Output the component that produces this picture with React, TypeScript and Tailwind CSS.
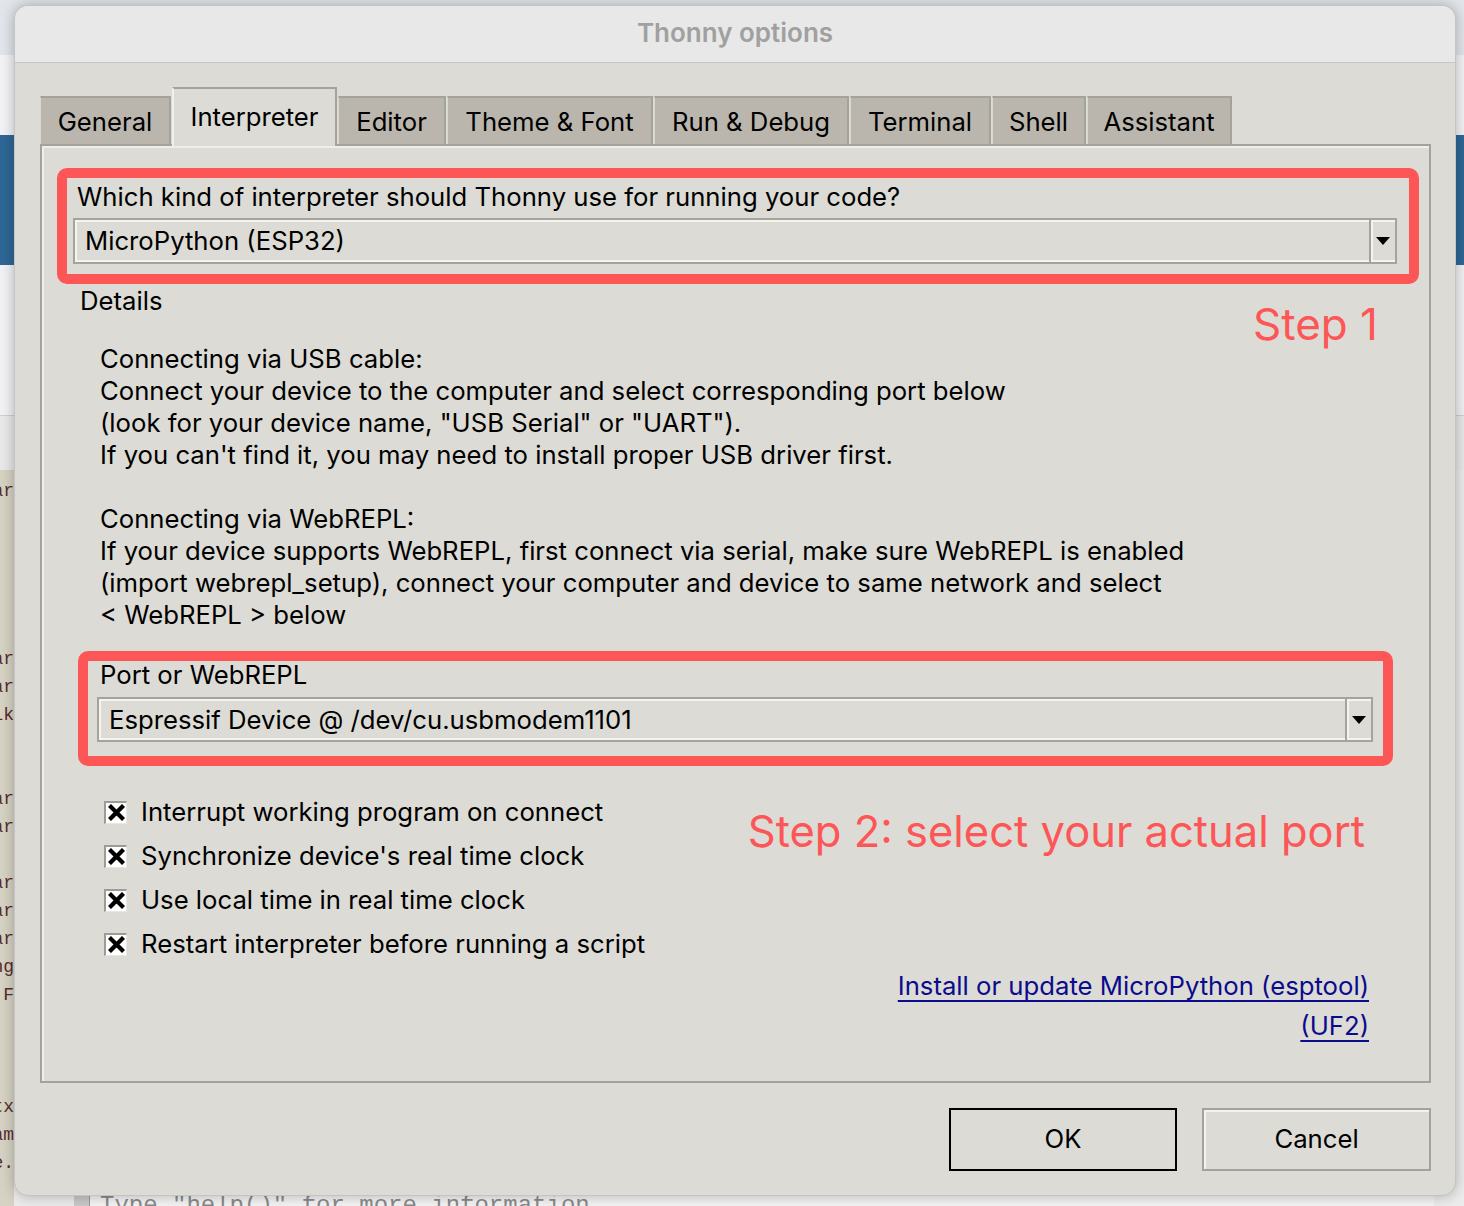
import React from "react";

const codeLines: { row: number; text: string }[] = [
  { row: 0, text: "var" },
  { row: 6, text: "var" },
  { row: 7, text: "var" },
  { row: 8, text: "lk" },
  { row: 11, text: "var" },
  { row: 12, text: "var" },
  { row: 14, text: "var" },
  { row: 15, text: "var" },
  { row: 16, text: "var" },
  { row: 17, text: "ing" },
  { row: 18, text: " F" },
  { row: 22, text: "ctx" },
  { row: 23, text: "ram" },
  { row: 24, text: "se." },
];

function CodeStrip() {
  const rows: string[] = [];
  for (let i = 0; i < 26; i++) {
    const f = codeLines.find((c) => c.row === i);
    rows.push(f ? f.text : "\u00a0");
  }
  return (
    <div className="w-[14px] bg-[#d6d3c4] overflow-hidden flex flex-col items-end pt-[7px] [font-family:'Liberation_Mono',monospace] text-[18px] leading-[28px] text-[#5a2c2c]">
      {rows.map((r, i) => (
        <div key={i} className="whitespace-pre">
          {r}
        </div>
      ))}
    </div>
  );
}

function Combo({ value, h }: { value: string; h: string }) {
  return (
    <div className={`flex ${h}`}>
      <div className="flex-1 flex items-center pl-[10px] border-2 border-[#a5a49b] shadow-[inset_0_2px_0_#f5f4f0,inset_2px_0_0_#f5f4f0,inset_0_-2px_0_#f5f4f0] bg-[#dcdbd5]">
        <span className="text-[25.7px] leading-[32px] text-black">{value}</span>
      </div>
      <div className="w-[26px] flex items-center justify-center border-2 border-l-0 border-[#a5a49b] shadow-[inset_0_2px_0_#f5f4f0,inset_2px_0_0_#f5f4f0,inset_0_-2px_0_#f5f4f0] bg-[#dcdbd5]">
        <svg width="14" height="8" viewBox="0 0 14 8">
          <path d="M0 0 H14 L7 8 Z" fill="#000" />
        </svg>
      </div>
    </div>
  );
}

function Check({ label }: { label: string }) {
  return (
    <div className="h-[44px] flex items-center gap-[14px]">
      <div className="w-[23px] h-[23px] bg-white border-t-2 border-l-2 border-[#9d9c93] border-b border-r border-b-[#e8e7e2] border-r-[#e8e7e2] flex items-center justify-center">
        <svg width="17" height="17" viewBox="0 0 16 16">
          <path d="M2.8 2.8 L13.2 13.2 M13.2 2.8 L2.8 13.2" stroke="#000" strokeWidth="4" strokeLinecap="square" />
        </svg>
      </div>
      <span className="text-[25.7px] leading-[32px] text-black">{label}</span>
    </div>
  );
}

const tabs = [
  { name: "General", w: "w-[131px]" },
  { name: "Interpreter", w: "w-[165px]", active: true },
  { name: "Editor", w: "w-[108px]" },
  { name: "Theme & Font", w: "w-[206px]" },
  { name: "Run & Debug", w: "w-[195px]" },
  { name: "Terminal", w: "w-[141px]" },
  { name: "Shell", w: "w-[94px]" },
  { name: "Assistant", w: "w-[145px]" },
];

export default function App() {
  return (
    <div className="relative w-[1464px] h-[1206px] overflow-hidden bg-[#ececec] [font-family:Inter,'Noto_Sans',sans-serif]">
      {/* background application */}
      <div className="flex flex-col h-full">
        <div className="h-[55px] bg-[#e2e5ea]" />
        <div className="h-[80px] bg-[#f3f3f5]" />
        <div className="h-[130px] bg-[#2e6796]" />
        <div className="h-[150px] bg-[#f2f2f4]" />
        <div className="h-[55px] bg-[#e9e9e9] border-t border-[#cfcfcf]" />
        <div className="flex-1 flex">
          <CodeStrip />
          <div className="flex-1 flex flex-col justify-end bg-[#ececec]">
            <div className="h-[16px] ml-[60px] mr-[30px] bg-[#c9c9c9] flex">
              <div className="w-[15px]" />
              <div className="flex-1 bg-[#f4f4f4] border-l border-[#9a9a9a] pl-[10px] overflow-hidden">
                <div className="[font-family:'Liberation_Mono',monospace] text-[24px] leading-[28px] text-[#8a8a8a] whitespace-pre mt-[2px]">
                  Type "help()" for more information.
                </div>
              </div>
            </div>
          </div>
        </div>
      </div>

      {/* dialog window */}
      <div className="absolute left-[14px] top-[5px] w-[1442px] h-[1191px] rounded-[14px] bg-[#dcdbd5] shadow-[0_0_14px_rgba(0,0,0,0.28)] border border-[#c4c4c0] overflow-hidden flex flex-col">
        <div className="h-[57px] shrink-0 bg-[#e8e8e8] border-b border-[#c6c6c2] flex items-center justify-center">
          <span className="text-[26px] font-semibold text-[#a0a0a0] leading-none -mt-[2px]">Thonny options</span>
        </div>

        <div className="flex-1 flex flex-col pl-[25px] pr-[24px] pt-[24px] pb-[24px]">
          {/* tabs */}
          <div className="h-[57px] shrink-0 flex items-end gap-[1px]">
            {tabs.map((t) =>
              t.active ? (
                <div
                  key={t.name}
                  className={`${t.w} h-[59px] -mb-[2px] relative z-10 bg-[#dcdbd5] border-t-2 border-[#a4a39a] border-r-2 border-l-2 border-l-[#f1f0ec] flex items-center justify-center pb-[1px]`}
                >
                  <span className="text-[25.7px] text-black">{t.name}</span>
                </div>
              ) : (
                <div
                  key={t.name}
                  className={`${t.w} h-[48px] bg-[#bab6ae] border-t-2 border-[#a4a39a] border-l border-l-[#d9d8d2] border-r-2 border-r-[#a4a39a] flex items-center justify-center pt-[3px]`}
                >
                  <span className="text-[25.7px] text-black">{t.name}</span>
                </div>
              )
            )}
          </div>

          {/* notebook panel */}
          <div className="flex-1 flex flex-col border-2 border-[#a4a39a] shadow-[inset_0_2px_0_#efeee9,inset_2px_0_0_#efeee9]">
            {/* red box 1 */}
            <div className="ml-[15px] mr-[10px] mt-[22px] border-[10px] border-[#fd5656] rounded-[10px] pl-[6px] pr-[12px] pt-[3px] pb-[10px] flex flex-col gap-[5px]">
              <div className="pl-[4px] text-[25.7px] leading-[32px] text-black">
                Which kind of interpreter should Thonny use for running your code?
              </div>
              <Combo value="MicroPython (ESP32)" h="h-[46px]" />
            </div>

            {/* details row */}
            <div className="mt-[1px] h-[32px] flex justify-between items-start pl-[38px] pr-[51px]">
              <span className="text-[25.7px] leading-[32px] text-black">Details</span>
              <span className="text-[44px] leading-[50px] mt-[14px] text-[#fd5656]">Step 1</span>
            </div>

            <div className="mt-[26px] pl-[58px] text-[25.7px] leading-[32px] text-black">
              <div>Connecting via USB cable:</div>
              <div>Connect your device to the computer and select corresponding port below</div>
              <div>(look for your device name, "USB Serial" or "UART").</div>
              <div>If you can't find it, you may need to install proper USB driver first.</div>
              <div>&nbsp;</div>
              <div>Connecting via WebREPL:</div>
              <div>If your device supports WebREPL, first connect via serial, make sure WebREPL is enabled</div>
              <div>(import webrepl_setup), connect your computer and device to same network and select</div>
              <div>&lt; WebREPL &gt; below</div>
            </div>

            {/* red box 2 */}
            <div className="mt-[20px] ml-[36px] mr-[36px] border-[10px] border-[#fd5656] rounded-[10px] pl-[9px] pr-[10px] pb-[14px] flex flex-col gap-[8px]">
              <div className="pl-[3px] text-[25.7px] leading-[28px] text-black">Port or WebREPL</div>
              <Combo value="Espressif Device @ /dev/cu.usbmodem1101" h="h-[45px]" />
            </div>

            {/* checkboxes + step 2 */}
            <div className="mt-[24px] flex justify-between pl-[62px] pr-[64px]">
              <div className="flex flex-col">
                <Check label="Interrupt working program on connect" />
                <Check label="Synchronize device's real time clock" />
                <Check label="Use local time in real time clock" />
                <Check label="Restart interpreter before running a script" />
              </div>
              <div className="pt-[16px]">
                <span className="text-[43.5px] leading-[50px] text-[#fd5656]">Step 2: select your actual port</span>
              </div>
            </div>

            {/* links */}
            <div className="flex flex-col items-end pr-[60px] text-[25.7px] leading-[40px] text-[#0b0b8c]">
              <a className="underline underline-offset-[5px] cursor-pointer">Install or update MicroPython (esptool)</a>
              <a className="underline underline-offset-[5px] cursor-pointer">(UF2)</a>
            </div>
          </div>

          {/* buttons */}
          <div className="mt-[25px] h-[63px] shrink-0 flex justify-end gap-[25px]">
            <button className="w-[228px] h-[63px] border-2 border-black bg-[#dcdbd5] text-[25.7px] text-black">OK</button>
            <button className="w-[229px] h-[63px] border-2 border-[#a4a39a] shadow-[inset_0_2px_0_#f3f2ee,inset_2px_0_0_#f3f2ee] bg-[#dcdbd5] text-[25.7px] text-black">
              Cancel
            </button>
          </div>
        </div>
      </div>
    </div>
  );
}
